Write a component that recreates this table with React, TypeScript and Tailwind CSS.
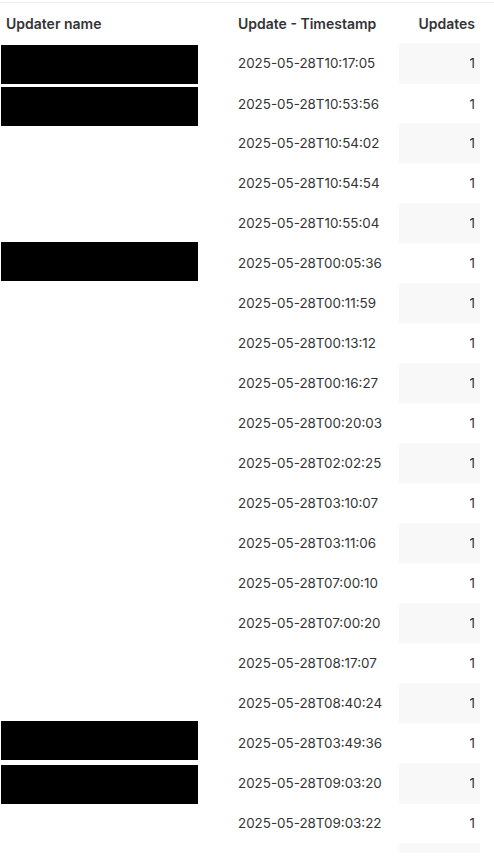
const rows: { ts: string; redact?: string }[] = [
  { ts: '2025-05-28T10:17:05', redact: 'mt-[2px]' },
  { ts: '2025-05-28T10:53:56', redact: 'mt-[4px]' },
  { ts: '2025-05-28T10:54:02' },
  { ts: '2025-05-28T10:54:54' },
  { ts: '2025-05-28T10:55:04' },
  { ts: '2025-05-28T00:05:36', redact: '-mt-[1px]' },
  { ts: '2025-05-28T00:11:59' },
  { ts: '2025-05-28T00:13:12' },
  { ts: '2025-05-28T00:16:27' },
  { ts: '2025-05-28T00:20:03' },
  { ts: '2025-05-28T02:02:25' },
  { ts: '2025-05-28T03:10:07' },
  { ts: '2025-05-28T03:11:06' },
  { ts: '2025-05-28T07:00:10' },
  { ts: '2025-05-28T07:00:20' },
  { ts: '2025-05-28T08:17:07' },
  { ts: '2025-05-28T08:40:24' },
  { ts: '2025-05-28T03:49:36', redact: '-mt-[2px]' },
  { ts: '2025-05-28T09:03:20', redact: 'mt-[2px]' },
  { ts: '2025-05-28T09:03:22' },
  { ts: '' },
];

export default function App() {
  return (
    <div className="w-[494px] h-[853px] overflow-hidden bg-white font-['Inter',sans-serif] text-[14px] text-[#333]">
      <div className="mt-[2px] border-t border-[#ededed] w-[494px]">
        {/* header */}
        <div className="grid grid-cols-[232px_167px_81px] h-[40px] items-center font-semibold text-[#343434]">
          <div className="pl-[6px]">Updater name</div>
          <div className="pl-[6px]">Update - Timestamp</div>
          <div className="pr-[5px] text-right">Updates</div>
        </div>

        {rows.map((r, i) => (
          <div key={i} className="grid grid-cols-[232px_167px_81px] h-[40px]">
            <div className="flex items-start">
              {r.redact && <div className={`ml-[1px] w-[197px] h-[39px] bg-black ${r.redact}`} />}
            </div>
            <div className="pl-[6px] flex items-center text-[13.4px]">{r.ts}</div>
            <div className={`pr-[5px] flex items-center justify-end text-[13.4px] ${i % 2 === 0 ? 'bg-[#f8f8f8]' : ''}`}>
              {r.ts ? '1' : ''}
            </div>
          </div>
        ))}
      </div>
    </div>
  );
}
